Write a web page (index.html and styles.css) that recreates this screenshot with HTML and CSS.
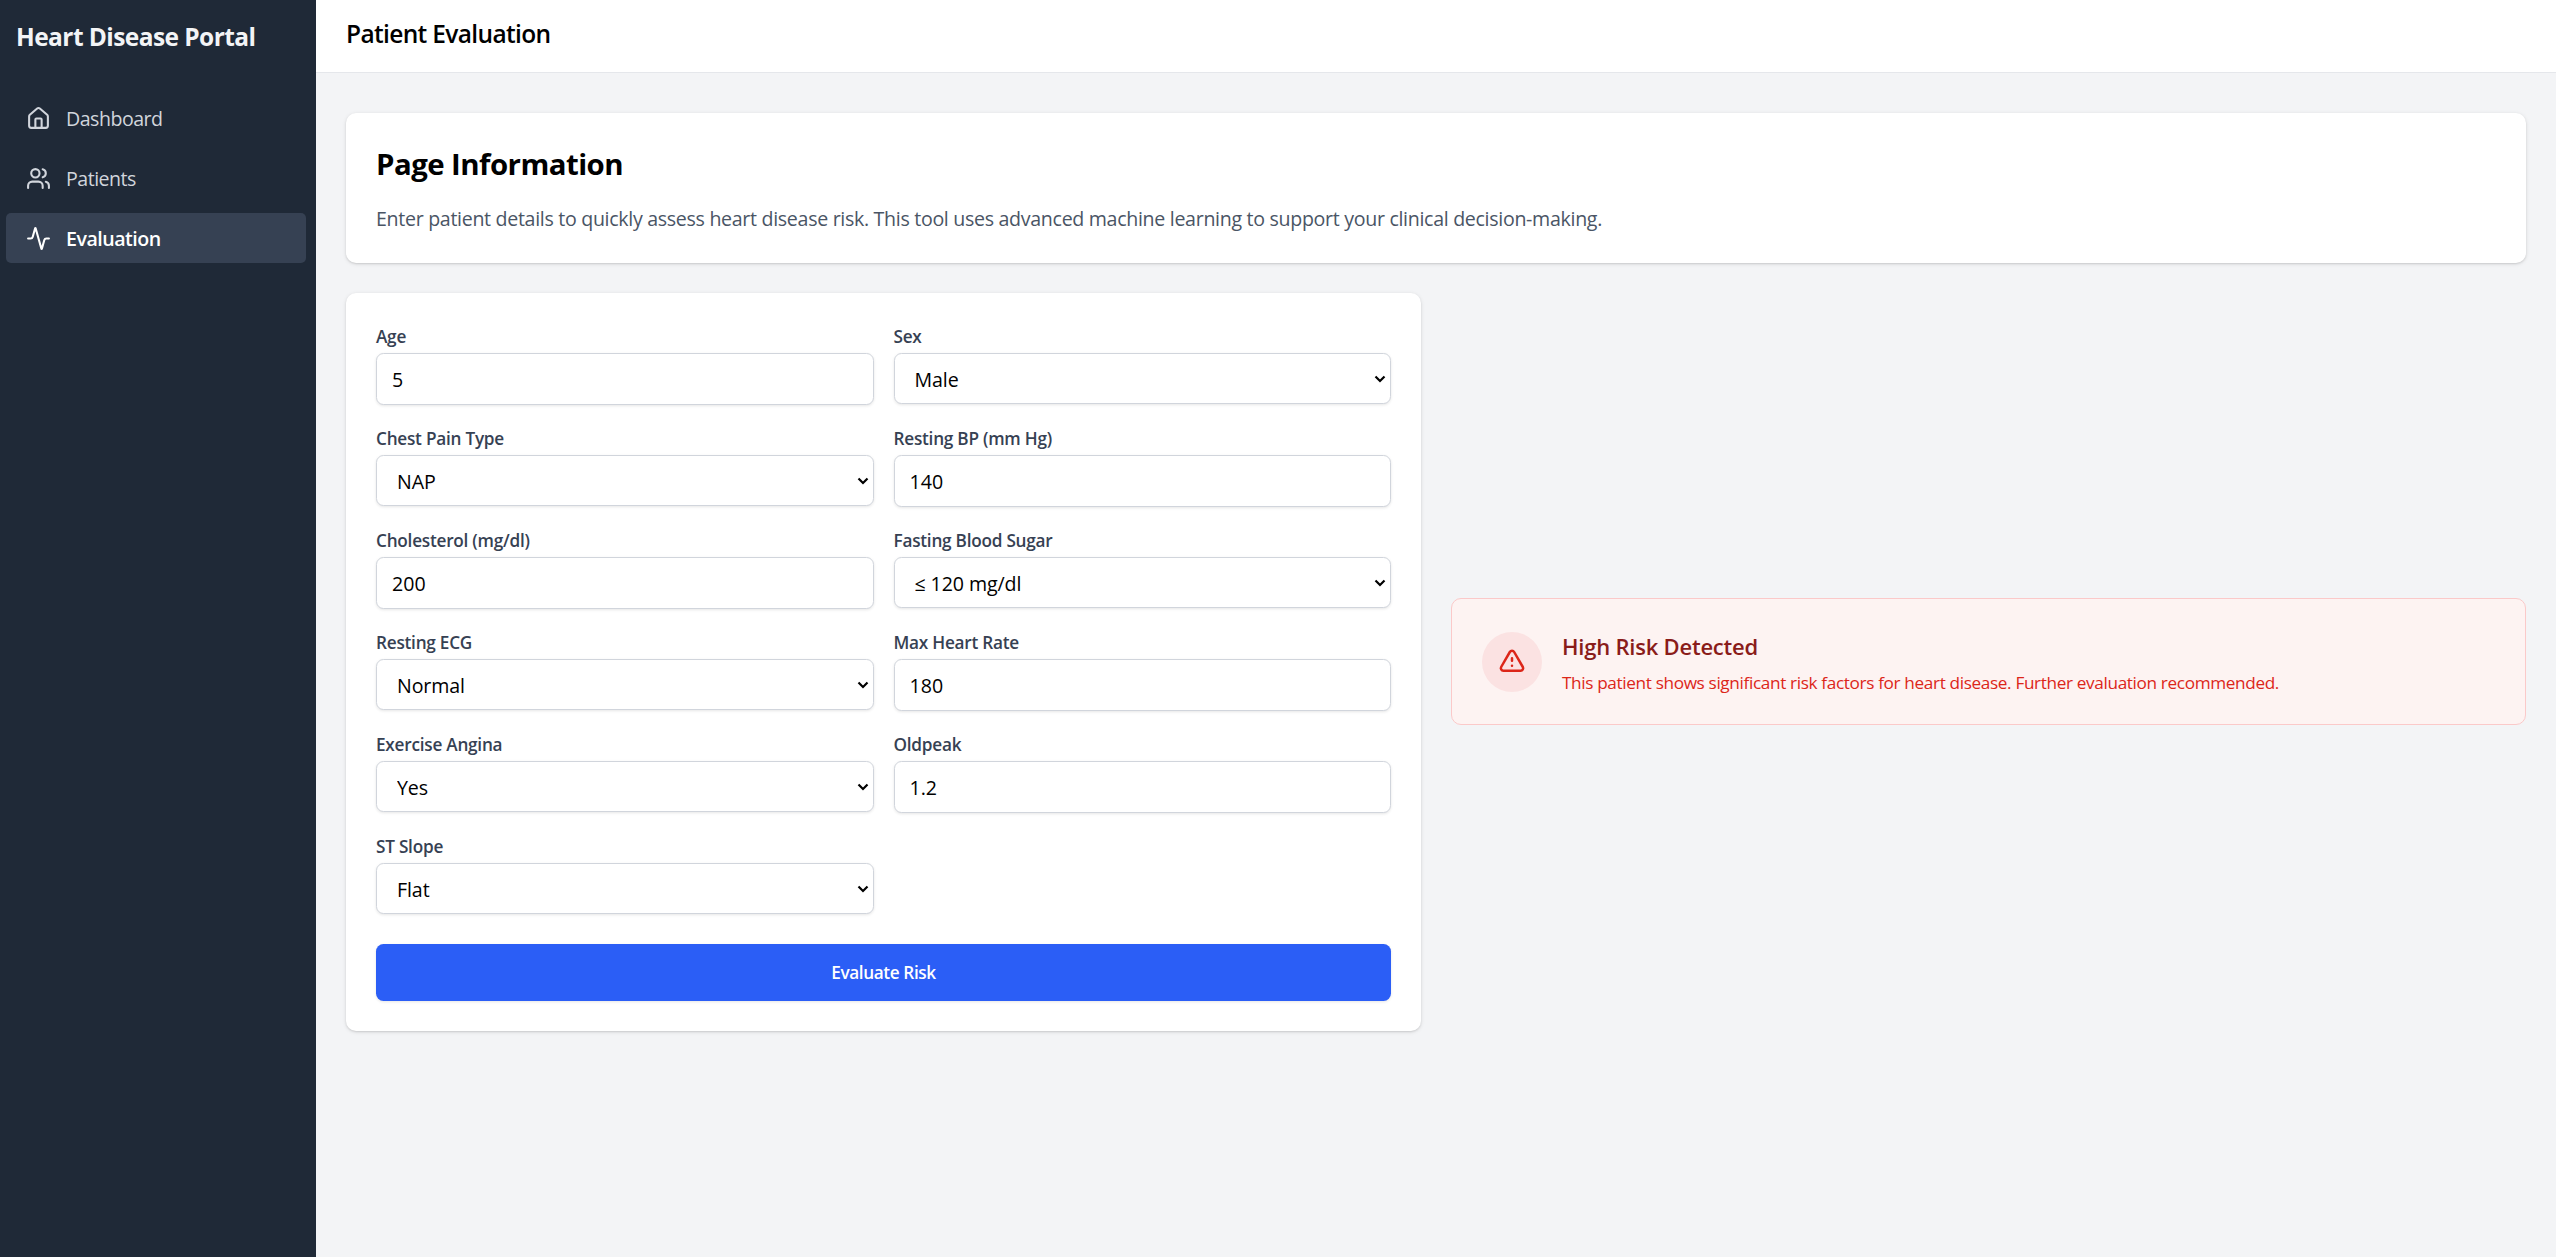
FILE: index.html
```html
<!DOCTYPE html>
<html lang="en">
<head>
<meta charset="utf-8">
<title>Heart Disease Portal</title>
<link rel="stylesheet" href="styles.css">
</head>
<body>
<div class="app">
  <aside class="sidebar">
    <h1 class="brand">Heart Disease Portal</h1>
    <nav class="nav">
      <a class="nav-item"><svg class="icon" viewBox="0 0 24 24"><path d="M15 21v-8a1 1 0 0 0-1-1h-4a1 1 0 0 0-1 1v8"/><path d="M3 10a2 2 0 0 1 .709-1.528l7-5.999a2 2 0 0 1 2.582 0l7 5.999A2 2 0 0 1 21 10v9a2 2 0 0 1-2 2H5a2 2 0 0 1-2-2z"/></svg><span>Dashboard</span></a>
      <a class="nav-item"><svg class="icon" viewBox="0 0 24 24"><path d="M16 21v-2a4 4 0 0 0-4-4H6a4 4 0 0 0-4 4v2"/><circle cx="9" cy="7" r="4"/><path d="M22 21v-2a4 4 0 0 0-3-3.87"/><path d="M16 3.13a4 4 0 0 1 0 7.75"/></svg><span>Patients</span></a>
      <a class="nav-item active"><svg class="icon" viewBox="0 0 24 24"><path d="M22 12h-2.48a2 2 0 0 0-1.93 1.46l-2.35 8.36a.25.25 0 0 1-.48 0L9.24 2.18a.25.25 0 0 0-.48 0l-2.35 8.36A2 2 0 0 1 4.49 12H2"/></svg><span>Evaluation</span></a>
    </nav>
  </aside>
  <div class="content">
    <header class="topbar"><h2 class="topbar-title">Patient Evaluation</h2></header>
    <main class="main">
      <section class="card info">
        <h2 class="info-title">Page Information</h2>
        <p class="info-text">Enter patient details to quickly assess heart disease risk. This tool uses advanced machine learning to support your clinical decision-making.</p>
      </section>
      <div class="columns">
        <form class="card form">
          <div class="fields">
            <div class="field"><label class="label">Age</label><input class="control" value="5"></div>
            <div class="field"><label class="label">Sex</label><div class="picker"><select class="control select"><option>Male</option></select><svg class="chevron" viewBox="0 0 12 8"><path d="M1.5 1.5 6 6l4.5-4.5"/></svg></div></div>
            <div class="field"><label class="label">Chest Pain Type</label><div class="picker"><select class="control select"><option>NAP</option></select><svg class="chevron" viewBox="0 0 12 8"><path d="M1.5 1.5 6 6l4.5-4.5"/></svg></div></div>
            <div class="field"><label class="label">Resting BP (mm Hg)</label><input class="control" value="140"></div>
            <div class="field"><label class="label">Cholesterol (mg/dl)</label><input class="control" value="200"></div>
            <div class="field"><label class="label">Fasting Blood Sugar</label><div class="picker"><select class="control select"><option>≤ 120 mg/dl</option></select><svg class="chevron" viewBox="0 0 12 8"><path d="M1.5 1.5 6 6l4.5-4.5"/></svg></div></div>
            <div class="field"><label class="label">Resting ECG</label><div class="picker"><select class="control select"><option>Normal</option></select><svg class="chevron" viewBox="0 0 12 8"><path d="M1.5 1.5 6 6l4.5-4.5"/></svg></div></div>
            <div class="field"><label class="label">Max Heart Rate</label><input class="control" value="180"></div>
            <div class="field"><label class="label">Exercise Angina</label><div class="picker"><select class="control select"><option>Yes</option></select><svg class="chevron" viewBox="0 0 12 8"><path d="M1.5 1.5 6 6l4.5-4.5"/></svg></div></div>
            <div class="field"><label class="label">Oldpeak</label><input class="control" value="1.2"></div>
            <div class="field"><label class="label">ST Slope</label><div class="picker"><select class="control select"><option>Flat</option></select><svg class="chevron" viewBox="0 0 12 8"><path d="M1.5 1.5 6 6l4.5-4.5"/></svg></div></div>
          </div>
          <button type="button" class="submit">Evaluate Risk</button>
        </form>
        <div class="alert">
          <div class="alert-badge"><svg class="alert-icon" viewBox="0 0 24 24"><path d="M12 9v2m0 4h.01m-6.938 4h13.856c1.54 0 2.502-1.667 1.732-3L13.732 4c-.77-1.333-2.694-1.333-3.464 0L3.34 16c-.77 1.333.192 3 1.732 3z"/></svg></div>
          <div class="alert-body">
            <h3 class="alert-title">High Risk Detected</h3>
            <p class="alert-text">This patient shows significant risk factors for heart disease. Further evaluation recommended.</p>
          </div>
        </div>
      </div>
    </main>
  </div>
</div>
</body>
</html>
```

FILE: styles.css
```css
* { box-sizing: border-box; margin: 0; padding: 0; }
html { font-size: 20px; }
body { font-family: "Open Sans", "Noto Sans", sans-serif; font-size: 19.6px; line-height: 30px; color: #000; background: #f3f4f6; }
.app { display: flex; min-height: 100vh; }
.sidebar { width: 316px; flex: none; background: #1f2937; color: #f3f4f6; }
.brand { padding: 19px 16px; font-size: 24.5px; line-height: 35px; font-weight: 700; letter-spacing: -0.566px; }
.nav { display: flex; flex-direction: column; gap: 10px; padding: 20px 10px 0 6px; }
.nav-item { display: flex; align-items: center; gap: 15px; height: 50px; padding: 0 20px; border-radius: 5px; color: #d1d5dc; letter-spacing: -0.51px; }
.nav-item span { padding-top: 2px; }
.nav-item.active { background: #364153; color: #fff; font-weight: 600; }
.icon { width: 25px; height: 25px; fill: none; stroke: currentColor; stroke-width: 2; stroke-linecap: round; stroke-linejoin: round; }
.content { flex: 1; min-width: 0; }
.topbar { height: 73px; padding: 16px 30px; background: #fff; border-bottom: 1px solid #e5e7eb; }
.topbar-title { font-size: 24.5px; line-height: 35px; font-weight: 600; letter-spacing: -0.65px; }
.main { display: flex; flex-direction: column; gap: 30px; padding: 40px 30px; }
.card { background: #fff; border-radius: 10px; padding: 30px; box-shadow: 0 1px 4px rgba(0,0,0,.1), 0 1px 2px rgba(0,0,0,.1); }
.info { height: 150px; padding-top: 31px; }
.info-title { font-size: 29.4px; line-height: 40px; font-weight: 700; letter-spacing: -0.54px; margin-bottom: 20px; }
.info-text { color: #4a5565; letter-spacing: -0.309px; }
.columns { display: grid; grid-template-columns: 1fr 1fr; gap: 30px; align-items: center; }
.fields { display: grid; grid-template-columns: 1fr 1fr; gap: 20px; }
.field { display: flex; flex-direction: column; }
.label { font-size: 17.2px; line-height: 25px; padding-top: 1px; font-weight: 600; letter-spacing: -0.24px; color: #364153; margin-bottom: 4px; }
.picker { display: grid; align-items: center; }
.picker > * { grid-area: 1 / 1; }
.control { height: 52px; border: 1px solid #d1d5dc; border-radius: 7.5px; padding: 1px 15px 0; background: #fff; font: inherit; color: #000; box-shadow: 0 1px 3px rgba(0,0,0,.1); }
.select { height: 51px; padding: 2px 20px 0; appearance: none; letter-spacing: -0.1px; }
.chevron { justify-self: end; width: 12px; height: 8px; margin-right: 5px; fill: none; stroke: #000; stroke-width: 2.2; pointer-events: none; }
.submit { width: 100%; height: 57px; margin-top: 30px; padding-top: 1px; border: 0; border-radius: 7.5px; background: #2b5ef6; color: #fff; font: inherit; font-size: 17.2px; font-weight: 600; letter-spacing: -0.391px; box-shadow: 0 1px 3px rgba(0,0,0,.1); }
.alert { display: flex; align-items: center; gap: 20px; height: 127px; margin-bottom: 1px; padding: 28px 30px; border: 1px solid #fbc9c9; border-radius: 10px; background: #fdf3f2; }
.alert-badge { display: flex; align-items: center; justify-content: center; width: 60px; height: 60px; border-radius: 50%; background: #fbe2e2; }
.alert-icon { width: 30px; height: 30px; fill: none; stroke: #dc2619; stroke-width: 2; stroke-linecap: round; stroke-linejoin: round; }
.alert-body { padding-top: 4px; }
.alert-title { font-size: 22px; line-height: 35px; font-weight: 600; letter-spacing: -0.22px; color: #8a1c1a; }
.alert-text { font-size: 17.2px; line-height: 30px; padding-top: 4px; letter-spacing: -0.358px; color: #dc2619; }
```
